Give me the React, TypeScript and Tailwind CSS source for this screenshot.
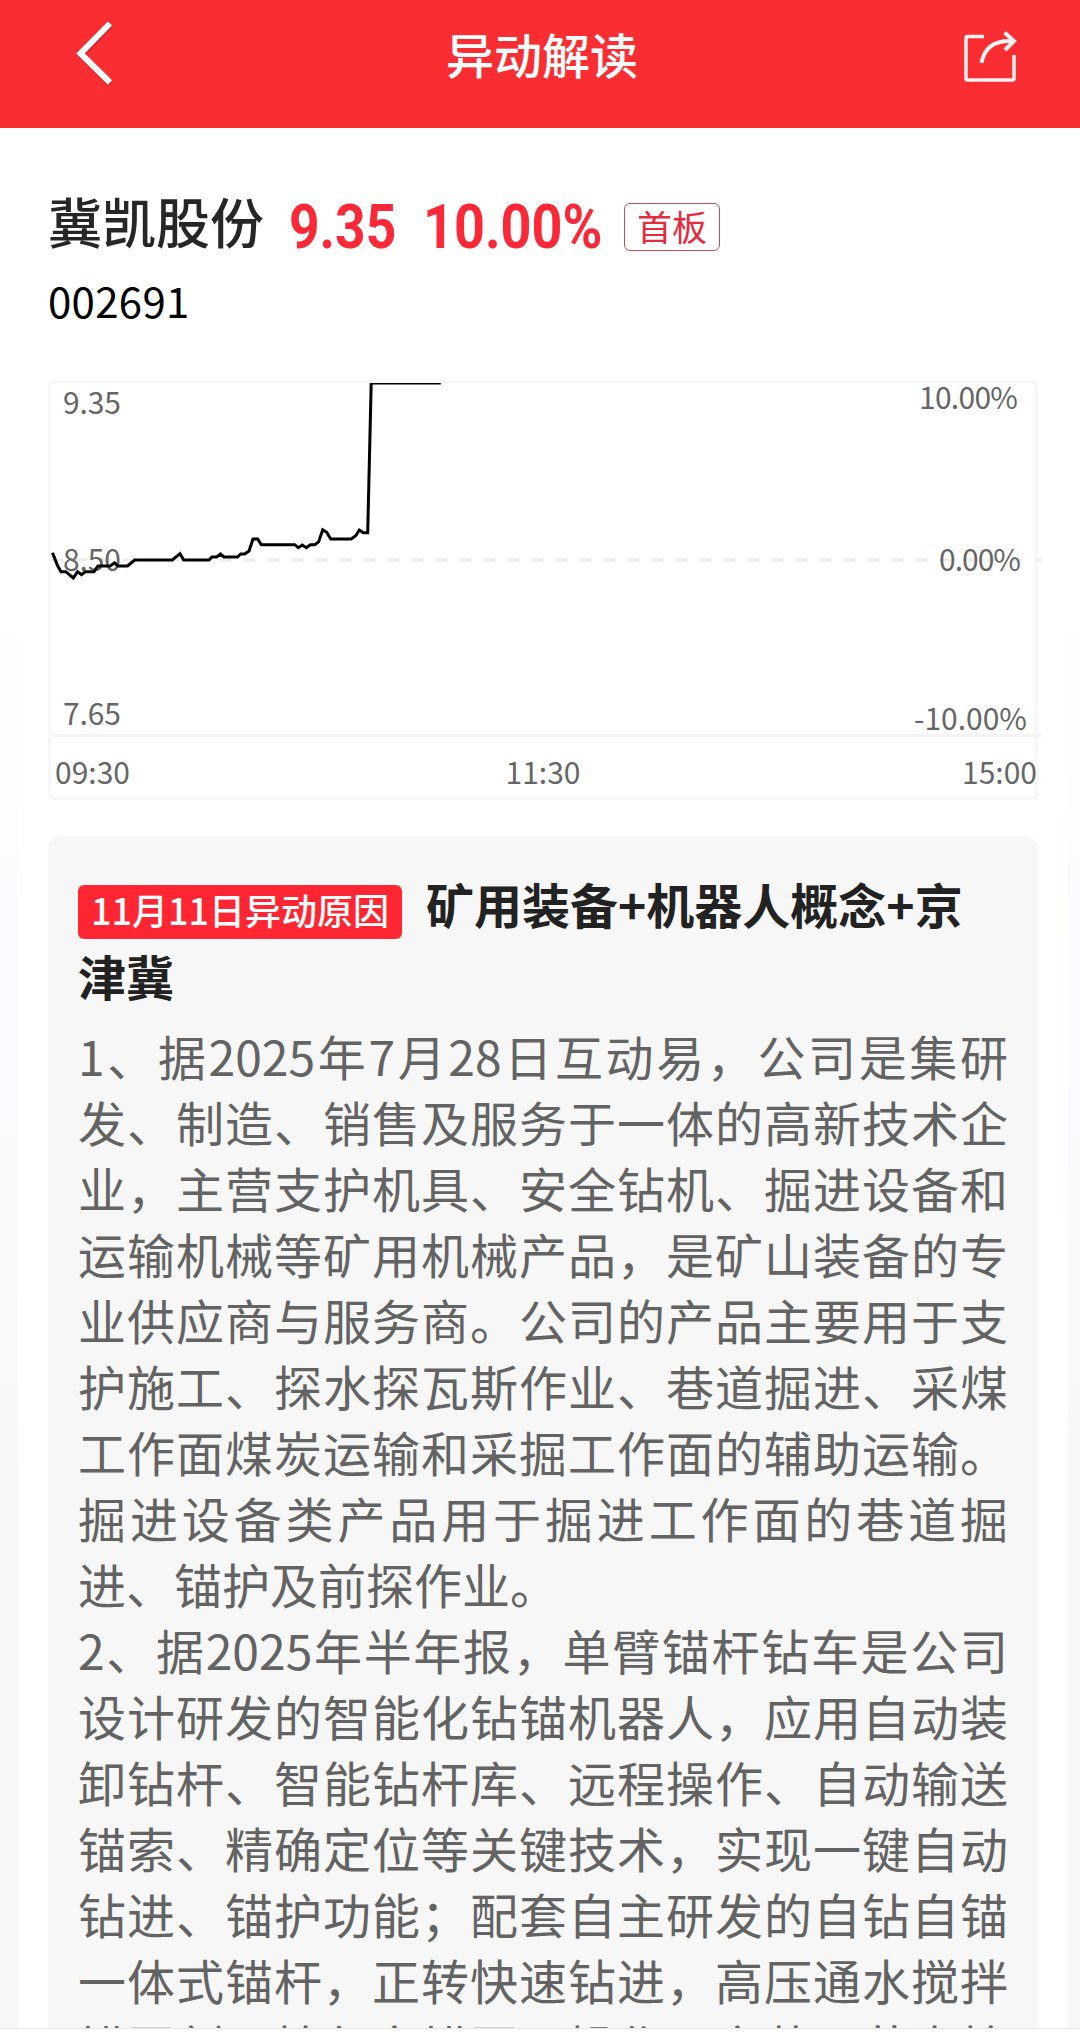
import React from "react"

interface PlotLabel {
  text: string
  x: number
  y: number
  width: number
}

const FONT = "font-['Noto_Sans_CJK_SC',sans-serif]"

// Plot coordinates start at the top left corner inside the chart border
const PRICE_LINE: [number, number][] = [
  [1.5, 169.7], [6.5, 182.5], [10, 188.7], [14.7, 188.7], [22.3, 195], [26.5, 188.7],
  [30.5, 191.7], [34.3, 188.7], [43, 188.7], [47, 183], [59, 183], [63.5, 180],
  [67, 183], [76.5, 183], [83.7, 177], [121.3, 177], [129, 170.7], [132.7, 177],
  [158, 177], [161, 174], [165.7, 174], [169.5, 171], [173, 174], [186.5, 174],
  [189.7, 171], [193.7, 171], [198, 168], [202, 156], [206.7, 156], [210.3, 161.7],
  [243.7, 161.7], [247.3, 164.7], [251.3, 162], [255.3, 164.7], [259.3, 161.7],
  [264, 161.7], [267.7, 158.7], [271.7, 146.7], [275.7, 149.3], [279.7, 156],
  [300.3, 156], [304.7, 152.7], [308.3, 147], [312.3, 149.7], [316.7, 149.7],
  [320.2, 0], [389.8, 0],
]

const PLOT_LABELS: PlotLabel[] = [
  { text: "9.35", x: 12, y: 30.5, width: 58 },
  { text: "8.50", x: 12, y: 187.5, width: 58 },
  { text: "7.65", x: 12, y: 341.5, width: 58 },
  { text: "10.00%", x: 868, y: 26, width: 99 },
  { text: "0.00%", x: 888, y: 187.5, width: 82 },
  { text: "-10.00%", x: 863, y: 346.5, width: 113 },
]

const HOURS = ["09:30", "11:30", "15:00"]

const REASONS: string[][] = [
  [
    "1、据2025年7月28日互动易，公司是集研",
    "发、制造、销售及服务于一体的高新技术企",
    "业，主营支护机具、安全钻机、掘进设备和",
    "运输机械等矿用机械产品，是矿山装备的专",
    "业供应商与服务商。公司的产品主要用于支",
    "护施工、探水探瓦斯作业、巷道掘进、采煤",
    "工作面煤炭运输和采掘工作面的辅助运输。",
    "掘进设备类产品用于掘进工作面的巷道掘",
    "进、锚护及前探作业。",
  ],
  [
    "2、据2025年半年报，单臂锚杆钻车是公司",
    "设计研发的智能化钻锚机器人，应用自动装",
    "卸钻杆、智能钻杆库、远程操作、自动输送",
    "锚索、精确定位等关键技术，实现一键自动",
    "钻进、锚护功能；配套自主研发的自钻自锚",
    "一体式锚杆，正转快速钻进，高压通水搅拌",
    "锚固剂，拌匀安锚固，操作、安装、节省检",
  ],
]

const Header: React.FC = () => (
  <header className="flex h-32 shrink-0 items-start justify-between bg-[#fa2d32] pr-[60px] pl-[72px] text-white">
    <svg className="mt-4 h-[76px] w-[50px]" viewBox="0 0 50 76" fill="none">
      <path d="M38 9.5 L9.5 39.5 L38 68.5" stroke="#8f1a20" strokeOpacity="0.4" strokeWidth="6" />
      <path d="M38 7.5 L8.5 37.5 L38 66.5" stroke="currentColor" strokeWidth="6" />
    </svg>
    <h1 className="pt-[17px] text-[48px] leading-[72px] font-medium">异动解读</h1>
    <svg className="mt-[28px] h-[58px] w-[58px]" viewBox="0 0 58 58" fill="none" stroke="#fff0f0" strokeWidth="3.5">
      <path d="M22 8.5 H5.5 Q4 8.5 4 10 V50.5 Q4 52 5.5 52 H50.5 Q52 52 52 50.5 V27" />
      <path d="M19.5 35 C22 20 32 12 51 13" strokeWidth="4" />
      <path d="M42.5 4.5 L52 13 L43 22" strokeWidth="4" />
    </svg>
  </header>
)

const StockSummary: React.FC = () => (
  <section className="h-[252px] shrink-0 pt-[55px] pl-[30px]">
    <div className="flex h-[84px] items-center">
      <h2 className="mb-[8px] w-[241px] text-[54px] leading-[76px] font-medium text-[#262626]">冀凯股份</h2>
      <span className="mt-[4px] w-[134px] origin-left scale-x-[0.86] font-['Roboto'] text-[62px] leading-[78px] font-bold text-[#fb2938]">
        9.35
      </span>
      <span className="mt-[4px] w-[201px] origin-left scale-x-[0.87] font-['Roboto'] text-[62px] leading-[78px] font-bold text-[#fb2938]">
        10.00%
      </span>
      <span className="mt-[4px] flex h-[48px] w-[96px] items-center justify-center rounded-[6px] border border-[#c05060] pb-[4px] text-[35px] leading-none text-[#e52b40]">
        首板
      </span>
    </div>
    <p className="text-[42px] leading-[66px] tracking-[0.3px] text-black">002691</p>
  </section>
)

const PriceChart: React.FC = () => (
  <section className="mx-[30px] h-[420px] shrink-0 rounded-[6px] border-[3px] border-[#f7f7f7]">
    <svg className="block h-[354px] w-[990px]" viewBox="0 0 990 354" fill="none">
      <line x1="0" y1="177" x2="990" y2="177" stroke="#edebed" strokeWidth="3" strokeDasharray="12 12" />
      <line x1="0" y1="352.5" x2="990" y2="352.5" stroke="#f5f3f5" strokeWidth="3" />
      {PLOT_LABELS.map((label) => (
        <text
          key={label.text}
          x={label.x}
          y={label.y}
          textLength={label.width}
          fill="#666666"
          className="text-[30px]"
        >
          {label.text}
        </text>
      ))}
      <polyline points={PRICE_LINE.map((p) => p.join(",")).join(" ")} stroke="#000000" strokeWidth="3" />
    </svg>
    <div className="-mr-[2px] flex justify-between pt-[12px] pl-[4px] text-[30px] leading-[44px] text-[#666666]">
      {HOURS.map((hour) => (
        <span key={hour} className="even:-ml-[6px]">
          {hour}
        </span>
      ))}
    </div>
  </section>
)

const ReasonCard: React.FC = () => (
  <section className="mx-[30px] mt-9 grow rounded-t-[14px] bg-[#f7f7f7] px-[30px] pt-[31px]">
    <h3 className="mb-[11px] text-[48px] leading-[72px] font-bold text-[#222222]">
      <span className="mr-[24px] inline-block h-[54px] w-[324px] rounded-[6px] bg-[#ff2633] text-center align-[-1px] text-[36px] leading-[49px] font-medium text-white">
        11月11日异动原因
      </span>
      矿用装备+机器人概念+京
      <br />
      津冀
    </h3>
    {REASONS.map((lines, i) => (
      <div key={i} className="text-[48px] leading-[66px] whitespace-nowrap text-[#636363]">
        {lines.map((line) => (
          <p key={line} className={line.length > 12 ? "text-justify [text-align-last:justify]" : ""}>
            {line}
          </p>
        ))}
      </div>
    ))}
  </section>
)

const App: React.FC = () => (
  <div className={`${FONT} flex h-[2034px] w-[1080px] flex-col overflow-hidden bg-white`}>
    <Header />
    <main className="flex h-[1900px] shrink-0 overflow-hidden bg-linear-to-b from-white from-25% via-[#fdfaff] via-45% to-[#f7f7f7] to-75% pr-3 pl-[18px]">
      <div className="flex h-[1900px] w-[1050px] flex-col bg-white">
        <StockSummary />
        <PriceChart />
        <ReasonCard />
      </div>
    </main>
    <footer className="h-[6px] shrink-0 border-t border-[#e8e8e8] bg-white" />
  </div>
)

export default App
